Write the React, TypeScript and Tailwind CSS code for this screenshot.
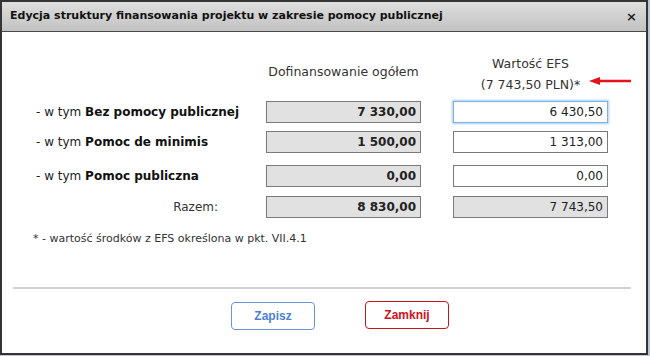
const rows = [
  { label: "Bez pomocy publicznej", total: "7 330,00", efs: "6 430,50", mt: "mt-[0px]", focus: true },
  { label: "Pomoc de minimis", total: "1 500,00", efs: "1 313,00", mt: "mt-[8px]", focus: false },
  { label: "Pomoc publiczna", total: "0,00", efs: "0,00", mt: "mt-[12px]", focus: false },
];

function Field({ value, grey, bold, focus }: { value: string; grey?: boolean; bold?: boolean; focus?: boolean }) {
  return (
    <div
      className={
        "flex h-[22px] w-[155px] items-center justify-end border pr-[4px] text-[12px] text-[#222] " +
        (grey ? "bg-[#e1e1e1] border-[#7a7a7a] " : "bg-white border-[#7a7a7a] ") +
        (bold ? "font-bold " : "") +
        (focus ? "border-[#7fb0e6] shadow-[0_0_2px_1px_#a9cdf3]" : "")
      }
    >
      {value}
    </div>
  );
}

export default function App() {
  return (
    <div className="h-[356px] w-[650px] overflow-hidden bg-[#b9c4d2] font-['DejaVu_Sans',sans-serif]">
      <div className="flex h-[355px] w-[648px] flex-col border-2 border-[#353535] bg-white">
        <div className="flex h-[30px] shrink-0 items-center justify-between border-b border-[#4a4a4a] bg-gradient-to-b from-[#dedede] to-[#c2c2c2] pl-[8px] pr-[9px]">
          <span className="text-[11px] font-bold text-[#111]">
            Edycja struktury finansowania projektu w zakresie pomocy publicznej
          </span>
          <span className="text-[13px] font-bold text-[#222]">×</span>
        </div>

        <div className="flex h-[69px] shrink-0 items-end pb-[6px] text-[12px] text-[#333]">
          <div className="w-[264px]" />
          <div className="mb-[13px] w-[155px] whitespace-nowrap text-center text-[12.5px]">Dofinansowanie ogółem</div>
          <div className="w-[32px]" />
          <div className="relative w-[155px] text-center text-[12.5px] leading-[21px]">
            <div>Wartość EFS</div>
            <div>(7 743,50 PLN)*</div>
            <svg className="absolute left-[136px] top-[23px]" width="44" height="10" viewBox="0 0 44 10">
              <line x1="8" y1="5" x2="42" y2="5" stroke="#e3141b" strokeWidth="2.5" />
              <polygon points="0,5 11,1 11,9" fill="#e3141b" />
            </svg>
          </div>
        </div>

        {rows.map((r) => (
          <div key={r.label} className={"flex items-center text-[12px] text-[#222] " + r.mt}>
            <div className="w-[264px] pl-[34px]">
              - w tym <span className="font-bold text-[#111]">{r.label}</span>
            </div>
            <Field value={r.total} grey bold />
            <div className="w-[32px]" />
            <Field value={r.efs} focus={r.focus} />
          </div>
        ))}

        <div className="mt-[9px] flex items-center text-[12px] text-[#333]">
          <div className="w-[216px] text-right">Razem:</div>
          <div className="w-[48px]" />
          <Field value="8 830,00" grey bold />
          <div className="w-[32px]" />
          <Field value="7 743,50" grey />
        </div>

        <div className="mt-[15px] pl-[31px] text-[11px] leading-[12px] text-[#333]">
          * - wartość środków z EFS określona w pkt. VII.4.1
        </div>

        <div className="ml-[11px] mt-[42px] h-[2px] w-[618px] bg-[#d2d2d2]" />

        <div className="mt-[12px] flex items-start font-['Liberation_Sans',sans-serif] text-[12px] font-bold">
          <div className="ml-[229px] mt-[1px] flex h-[28px] w-[84px] items-center justify-center rounded-[4px] border border-[#6b93d8] text-[#4d7fd2]">
            Zapisz
          </div>
          <div className="ml-[50px] flex h-[28px] w-[84px] items-center justify-center rounded-[4px] border border-[#c8141c] text-[#d0121a]">
            Zamknij
          </div>
        </div>
      </div>
    </div>
  );
}
